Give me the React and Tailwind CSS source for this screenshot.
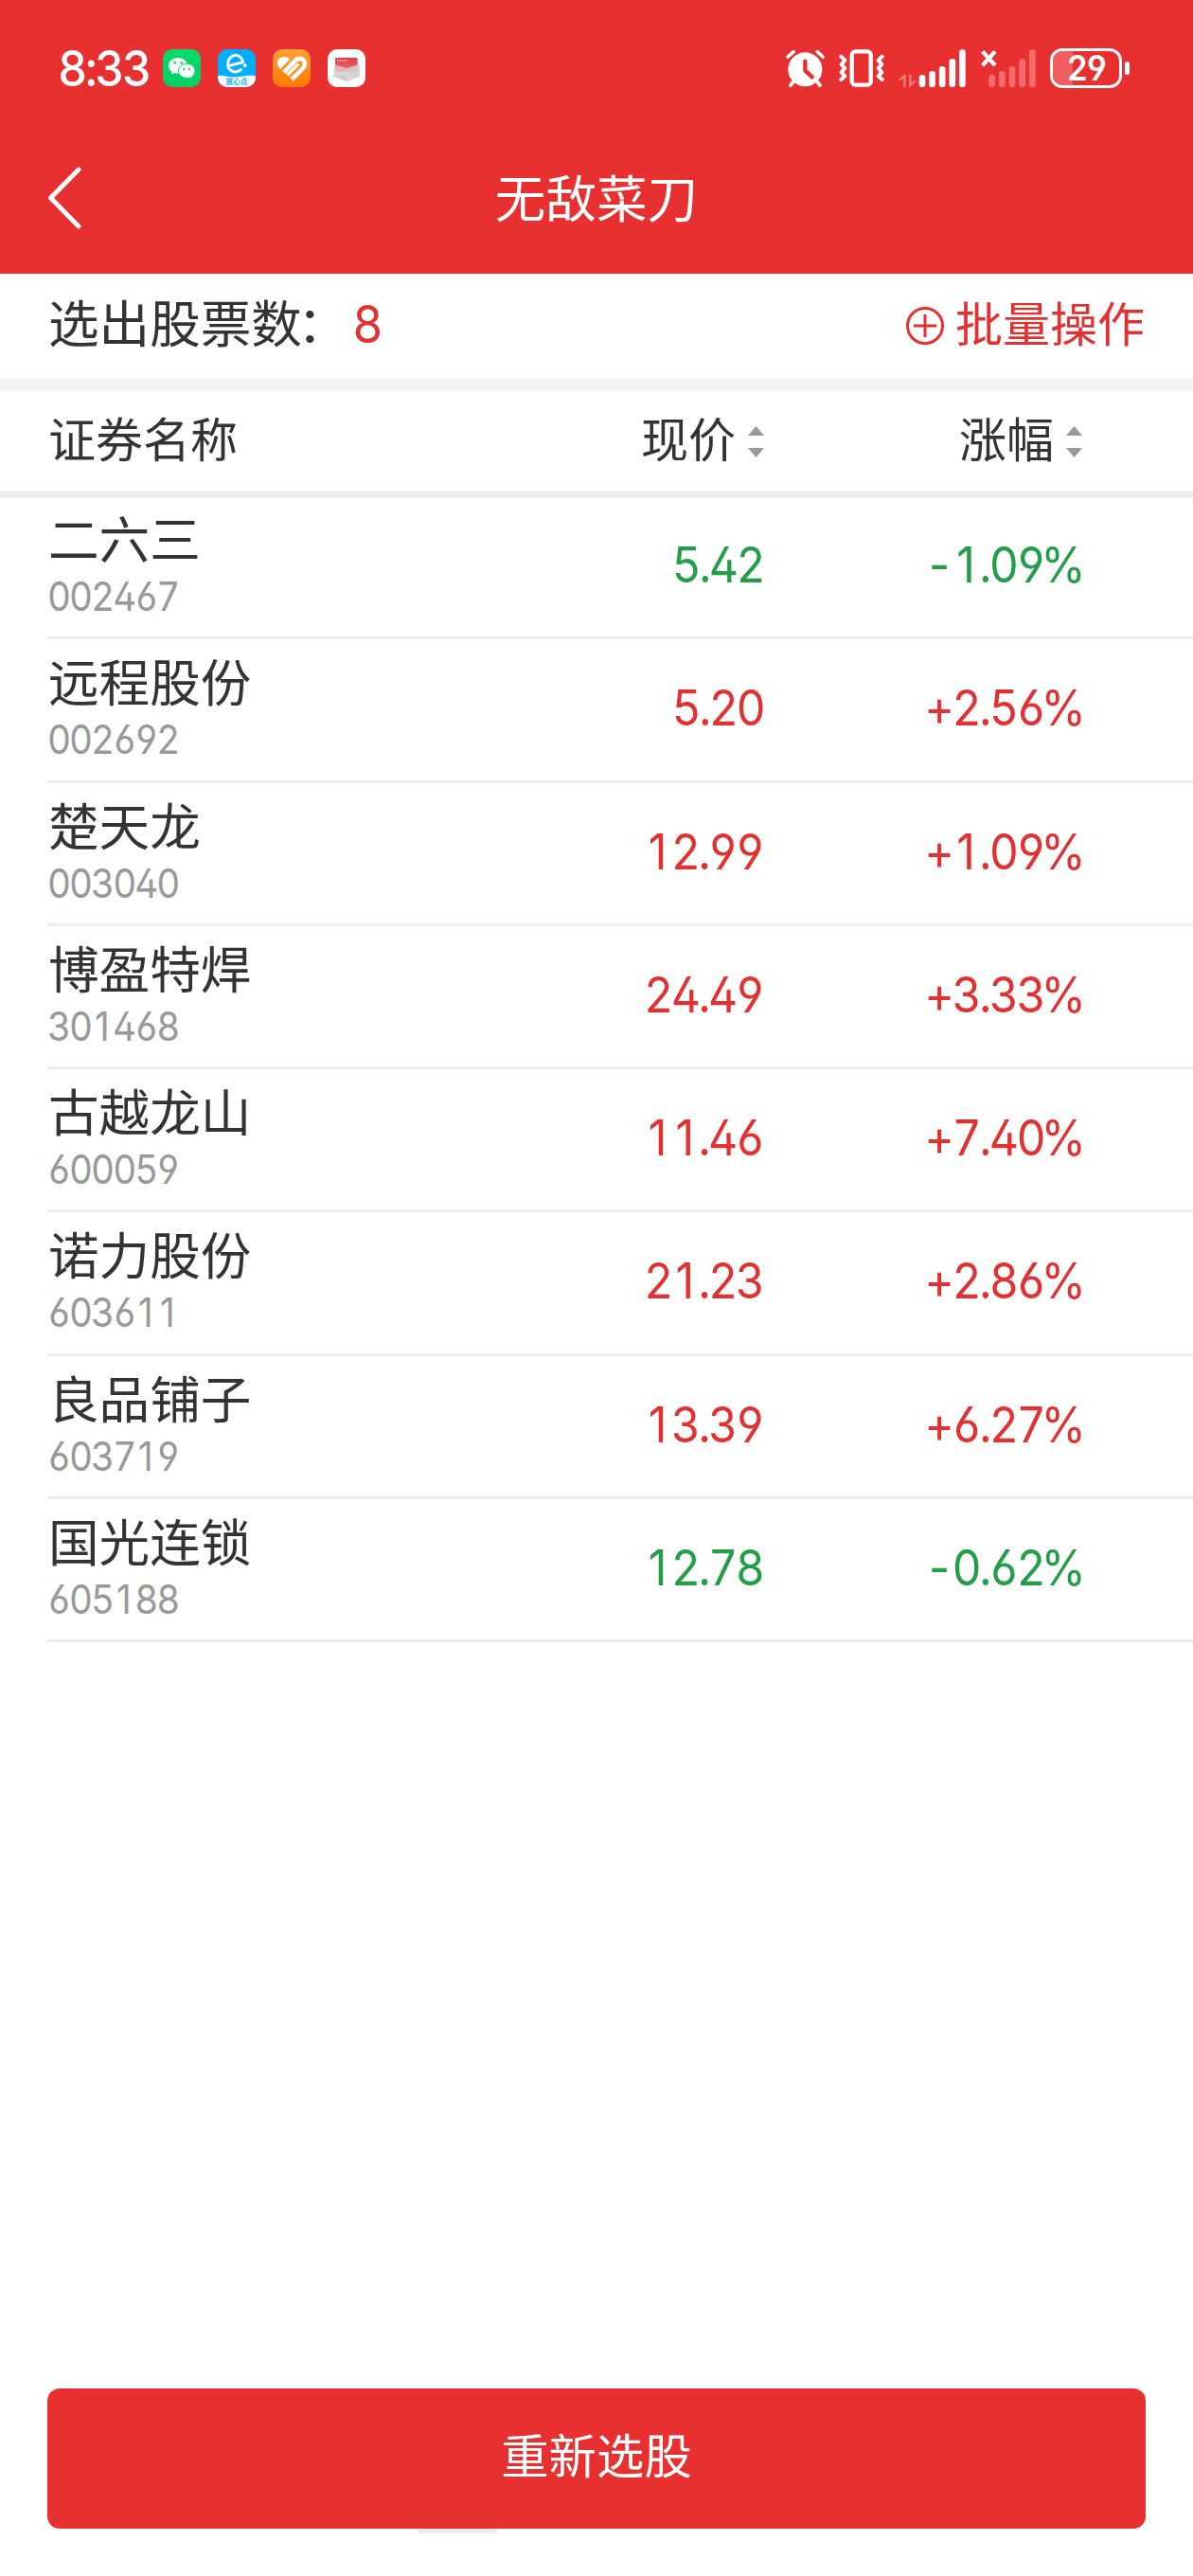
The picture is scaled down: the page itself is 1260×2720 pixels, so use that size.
const stocks = [
  { name: '二六三', code: '002467', price: '5.42', change: '-1.09%' },
  { name: '远程股份', code: '002692', price: '5.20', change: '+2.56%' },
  { name: '楚天龙', code: '003040', price: '12.99', change: '+1.09%' },
  { name: '博盈特焊', code: '301468', price: '24.49', change: '+3.33%' },
  { name: '古越龙山', code: '600059', price: '11.46', change: '+7.40%' },
  { name: '诺力股份', code: '603611', price: '21.23', change: '+2.86%' },
  { name: '良品铺子', code: '603719', price: '13.39', change: '+6.27%' },
  { name: '国光连锁', code: '605188', price: '12.78', change: '-0.62%' },
]

// Classes for the characters that need other spacing than the plain digits.
const special = {
  1: 'pl-[0.1em] pr-[0.141em] [font-feature-settings:"kern"_0]',
  '%': '-ml-[0.06em]',
}

// Figures on a fixed pitch; the "1" uses its footless form, padded to the width of the others.
function Figures({ value, className = '' }) {
  return (
    <span
      className={`inline-block whitespace-nowrap font-[Inter,sans-serif] tracking-[-0.052em] scale-x-92 [font-feature-settings:"tnum","cv02","cv03","cv04"] ${className}`}
    >
      {value.split(/([1%])/).filter(Boolean).map((part, i) =>
        special[part] ? (
          <span key={i} className={special[part]}>{part}</span>
        ) : (
          part
        ),
      )}
    </span>
  )
}

function WeChatIcon() {
  return (
    <svg className="size-10" viewBox="0 0 120 120">
      <defs>
        <linearGradient id="wechat" x1="0" y1="0" x2="0" y2="1">
          <stop offset="0" stopColor="#05dc6c" />
          <stop offset="1" stopColor="#04cf62" />
        </linearGradient>
      </defs>
      <rect width="120" height="120" rx="30" fill="url(#wechat)" />
      <path d="M48 27c-17 0-30 11-30 25 0 8 4 15 11 19l-2 9 10-5c4 1 7 2 11 2 17 0 30-11 30-25S65 27 48 27z" fill="#fff" />
      <circle cx="38" cy="43" r="4" fill="#05d568" />
      <circle cx="59" cy="43" r="4" fill="#05d568" />
      <path d="M76 46c-15 0-27 10-27 23s12 22 27 22c3 0 6 0 9-1l8 4-2-7c7-4 11-10 11-18 0-13-11-23-26-23z" fill="#fff" stroke="#05d568" strokeWidth="3" />
      <circle cx="67" cy="63" r="3.5" fill="#05d568" />
      <circle cx="84" cy="63" r="3.5" fill="#05d568" />
    </svg>
  )
}

function ELetterIcon() {
  return (
    <div className="relative size-10 overflow-hidden rounded-[10px] bg-[#00aeff]">
      <svg className="size-10" viewBox="0 0 120 120">
        <path d="M0 84c20-3 32 6 58 4s40-7 62-3v35H0z" fill="#fff" />
        <path d="M36 52L80 41C75 20 58 15 46 22C30 31 28 55 38 64C48 75 64 73 73 65" fill="none" stroke="#fff" strokeWidth="9" strokeLinecap="round" strokeLinejoin="round" />
        <circle cx="86" cy="52" r="6" fill="#fff" />
      </svg>
      <span className="absolute inset-x-0 bottom-[2px] text-center text-[7.6px] leading-[8px] font-bold text-[#00aeff]">放心点</span>
    </div>
  )
}

function HealthIcon() {
  return (
    <svg className="size-10" viewBox="0 0 120 120">
      <defs>
        <linearGradient id="health" x1="0" y1="0" x2="0" y2="1">
          <stop offset="0" stopColor="#ffa033" />
          <stop offset="1" stopColor="#ff7a00" />
        </linearGradient>
      </defs>
      <rect width="120" height="120" rx="30" fill="url(#health)" />
      <path d="M16 51C11 36 22 23 36 24C43 24 49 27 54 32L25 62C20 59 18 56 16 51z" fill="#fff" />
      <path d="M36 73L70 37C78 28 90 27 97 34C104 42 103 53 95 61L60 96" fill="none" stroke="#fff" strokeWidth="14" />
      <path d="M47 82L82 47" stroke="#fff" strokeWidth="11" />
      <path d="M51 88L86 53" stroke="#ff8f1c" strokeWidth="5" />
    </svg>
  )
}

function BoxIcon() {
  return (
    <svg className="size-10" viewBox="0 0 120 120">
      <defs>
        <linearGradient id="card" x1="0" y1="0" x2="0" y2="1">
          <stop offset="0" stopColor="#e63c46" />
          <stop offset="1" stopColor="#ef6a70" />
        </linearGradient>
        <linearGradient id="side" x1="0" y1="0" x2="0" y2="1">
          <stop offset="0" stopColor="#dedede" stopOpacity="0.6" />
          <stop offset="1" stopColor="#c4c4c4" />
        </linearGradient>
      </defs>
      <rect width="120" height="120" rx="30" fill="#fff" />
      <rect x="24" y="27" width="71" height="45" rx="4" fill="url(#card)" />
      <path d="M30 36h32" stroke="#f6b6b9" strokeWidth="5" strokeDasharray="5 2" />
      <path d="M19 47L61 60V102L19 86z" fill="url(#side)" />
      <path d="M102 47L61 60V102L102 86z" fill="#d2d2d2" fillOpacity="0.9" />
    </svg>
  )
}

function AlarmIcon() {
  return (
    <svg className="h-10 w-[41px]" viewBox="90 66 123 120" fill="none" stroke="#fff" strokeLinecap="round">
      <circle cx="151" cy="130" r="54" fill="#fff" stroke="none" />
      <path d="M96 90L114 74M207 90L190 74" strokeWidth="11" />
      <path d="M116 166L105 180M187 166L198 180" strokeWidth="11" />
      <path d="M151 104V133L173 154" stroke="#e83030" strokeWidth="13" strokeLinejoin="round" />
    </svg>
  )
}

function VibrateIcon() {
  return (
    <svg className="h-10 w-12" viewBox="260 66 144 120" fill="none" stroke="#fff" strokeLinecap="round" strokeLinejoin="round">
      <rect x="301" y="73" width="60" height="106" rx="11" strokeWidth="13" />
      <path d="M267 89L279 101L268 114L279 126L268 139L279 151L267 162" strokeWidth="12" />
      <path d="M397 89L385 101L396 114L385 126L396 139L385 151L397 162" strokeWidth="12" />
    </svg>
  )
}

const bars = [147, 135, 120, 96, 67]

function SignalIcon() {
  return (
    <svg className="h-10 w-[71px]" viewBox="448 66 213 120">
      <g fill="none" stroke="#f27d7d" strokeWidth="7">
        <path d="M467 185V150L451 164" />
        <path d="M485 147V180L501 166" />
      </g>
      {bars.map((y, i) => (
        <rect key={y} x={513 + i * 31.8} y={y} width="20" height={186 - y} rx="9" fill="#fff" />
      ))}
    </svg>
  )
}

function NoSignalIcon() {
  return (
    <svg className="h-10 w-[58px]" viewBox="707 66 174 120">
      <path d="M712 73L752 117M752 73L712 117" stroke="#fff" strokeWidth="13" />
      {bars.map((y, i) => (
        <rect key={y} x={732 + i * 32} y={y} width="20" height={186 - y} rx="9" fill="#f26c6c" />
      ))}
    </svg>
  )
}

function Battery() {
  return (
    <div className="flex items-center gap-[3px]">
      <div className="relative flex h-[42px] w-[76px] items-center justify-center overflow-hidden rounded-[13px] border-[3.5px] border-white">
        <div className="absolute inset-y-0 left-0 w-[21px] bg-[#f05f5f]" />
        <Figures value="29" className="relative text-[37.5px] leading-none font-semibold text-white" />
      </div>
      <div className="h-[14px] w-[5px] rounded-full bg-white" />
    </div>
  )
}

function SortArrows() {
  return (
    <svg className="mt-[10px] h-[33px] w-[17px]" viewBox="0 0 17 33" fill="#999">
      <path d="M8.5 0L17 10H0zM0 23H17L8.5 33z" />
    </svg>
  )
}

function StockRow({ name, code, price, change }) {
  const tone = change.startsWith('-') ? 'text-[#249d48]' : 'text-[#e33131]'
  return (
    <li className="ml-[50px] flex h-[151.25px] border-b-3 border-[#ededed] pr-[116px]">
      <div className="flex flex-1 flex-col gap-[8px] pt-[13px]">
        <span className="ml-px text-[53.6px] leading-[60px] text-[#333]">{name}</span>
        <Figures value={code} className="origin-left self-start text-[42px] leading-[50px] text-[#999]" />
      </div>
      <div className={`flex items-center pb-[4px] text-[52.5px] leading-none ${tone}`}>
        <Figures value={price} className="origin-right" />
        <span className="flex w-[338px] justify-end">
          <Figures value={change} className="origin-right" />
        </span>
      </div>
    </li>
  )
}

export default function App() {
  return (
    <div className="flex h-[2720px] w-[1260px] flex-col bg-white font-['Noto_Sans_CJK_SC',sans-serif]">
      <header className="h-[289px] shrink-0 bg-[#e83030] text-white">
        <div className="flex h-36 items-center justify-between pr-[67px] pl-[61px]">
          <div className="flex h-full items-center">
            <Figures value="8:33" className="w-[103px] origin-left text-[52.5px] leading-none font-medium" />
            <div className="ml-2 flex gap-[18px]">
              <WeChatIcon />
              <ELetterIcon />
              <HealthIcon />
              <BoxIcon />
            </div>
          </div>
          <div className="flex items-center">
            <AlarmIcon />
            <span className="ml-[15px]"><VibrateIcon /></span>
            <span className="ml-[15px]"><SignalIcon /></span>
            <span className="ml-[16px]"><NoSignalIcon /></span>
            <span className="ml-[15px]"><Battery /></span>
          </div>
        </div>
        <div className="grid h-[145px] grid-cols-[1fr_auto_1fr] items-center pb-[19px] pl-[49px] pr-[49px]">
          <svg className="mt-[4px] h-[66px] w-[38px]" viewBox="0 0 38 66" fill="none" stroke="#fff" strokeWidth="4.8" strokeLinecap="round" strokeLinejoin="round">
            <path d="M34 3L4.500 33L34 63" />
          </svg>
          <h1 className="text-[53.6px] leading-[60px]">无敌菜刀</h1>
        </div>
      </header>

      <section className="flex h-[110px] shrink-0 items-center justify-between pr-[51px] pl-[51px]">
        <div className="flex items-center text-[53.6px] leading-[60px] text-[#333]">
          <span className="mb-[11px]">选出股票数<span className="-ml-[5px] mr-[5px]">：</span></span>
          <Figures value="8" className="mb-[4px] -ml-px origin-left text-[55px] text-[#e33131]" />
        </div>
        <button className="flex items-center gap-3 text-[50px] leading-[60px] text-[#e33131]">
          <svg className="size-10" viewBox="0 0 40 40" fill="none" stroke="currentColor" strokeWidth="3">
            <circle cx="20" cy="20" r="18.500" />
            <path d="M20 8V32M8 20H32" />
          </svg>
          <span className="mb-[10px]">批量操作</span>
        </button>
      </section>
      <div className="h-[14px] shrink-0 bg-[#f4f4f4]" />

      <div className="flex h-[112px] shrink-0 items-center border-b-6 border-[#ededed] pr-[117px] pb-[10px] pl-[51px] text-[50px] leading-[60px] text-[#333]">
        <span className="flex-1">证券名称</span>
        <div className="flex items-center gap-[13px]">
          <span>现价</span>
          <SortArrows />
        </div>
        <div className="flex w-[336px] items-center justify-end gap-[13px]">
          <span>涨幅</span>
          <SortArrows />
        </div>
      </div>

      <ul className="-mt-[0.85px]">
        {stocks.map((stock) => (
          <StockRow key={stock.code} {...stock} />
        ))}
      </ul>

      <footer className="mt-auto flex h-[198px] flex-col px-[50px]">
        <button className="h-[148px] shrink-0 rounded-[13px] bg-[#e83030] pb-[11px] text-[50.4px] leading-[60px] text-white">
          重新选股
        </button>
        <div className="ml-[391px] h-[5px] w-[84px] bg-[#ededed]" />
      </footer>
    </div>
  )
}
